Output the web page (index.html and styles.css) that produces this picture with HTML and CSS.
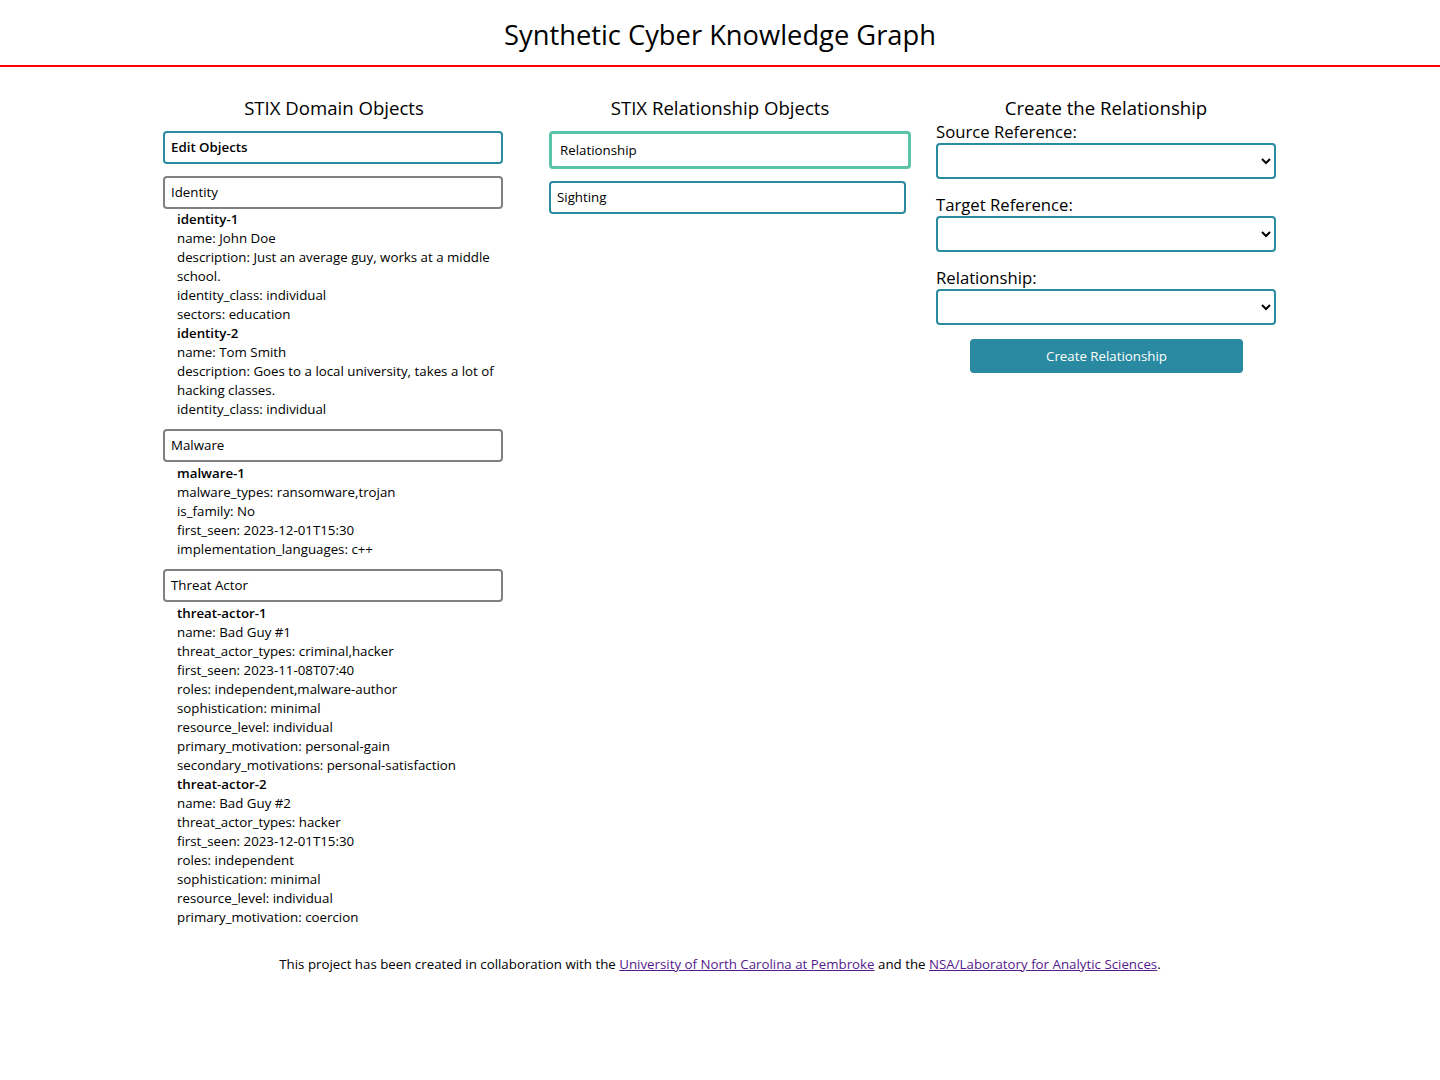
FILE: index.html
```html
<!DOCTYPE html>
<html lang="en">
<head>
<meta charset="utf-8">
<title>Synthetic Cyber Knowledge Graph</title>
<link rel="stylesheet" href="styles.css">
</head>
<body>
<header class="site-header">
  <h1 class="site-title">Synthetic Cyber Knowledge Graph</h1>
</header>
<main class="columns">
  <section class="col col-domain">
    <h2 class="col-title">STIX Domain Objects</h2>
    <div class="col-body">
      <div class="box box-edit">Edit Objects</div>
      <div class="box box-group">Identity</div>
      <ul class="obj-list">
        <li class="obj-id">identity-1</li>
        <li>name: John Doe</li>
        <li>description: Just an average guy, works at a middle school.</li>
        <li>identity_class: individual</li>
        <li>sectors: education</li>
        <li class="obj-id">identity-2</li>
        <li>name: Tom Smith</li>
        <li>description: Goes to a local university, takes a lot of hacking classes.</li>
        <li>identity_class: individual</li>
      </ul>
      <div class="box box-group">Malware</div>
      <ul class="obj-list obj-list-tall">
        <li class="obj-id">malware-1</li>
        <li>malware_types: ransomware,trojan</li>
        <li>is_family: No</li>
        <li>first_seen: 2023-12-01T15:30</li>
        <li>implementation_languages: c++</li>
      </ul>
      <div class="box box-group">Threat Actor</div>
      <ul class="obj-list obj-list-tall">
        <li class="obj-id">threat-actor-1</li>
        <li>name: Bad Guy #1</li>
        <li>threat_actor_types: criminal,hacker</li>
        <li>first_seen: 2023-11-08T07:40</li>
        <li>roles: independent,malware-author</li>
        <li>sophistication: minimal</li>
        <li>resource_level: individual</li>
        <li>primary_motivation: personal-gain</li>
        <li>secondary_motivations: personal-satisfaction</li>
        <li class="obj-id">threat-actor-2</li>
        <li>name: Bad Guy #2</li>
        <li>threat_actor_types: hacker</li>
        <li>first_seen: 2023-12-01T15:30</li>
        <li>roles: independent</li>
        <li>sophistication: minimal</li>
        <li>resource_level: individual</li>
        <li>primary_motivation: coercion</li>
      </ul>
    </div>
  </section>
  <section class="col col-rel">
    <h2 class="col-title">STIX Relationship Objects</h2>
    <div class="col-body">
      <div class="box box-rel box-active">Relationship</div>
      <div class="box box-rel">Sighting</div>
    </div>
  </section>
  <section class="col col-create">
    <h2 class="col-title">Create the Relationship</h2>
    <form class="col-body create-form">
      <label class="field-label" for="src">Source Reference:</label>
      <select class="field-select" id="src"><option></option></select>
      <label class="field-label" for="tgt">Target Reference:</label>
      <select class="field-select" id="tgt"><option></option></select>
      <label class="field-label" for="rel">Relationship:</label>
      <select class="field-select" id="rel"><option></option></select>
      <button type="button" class="create-btn">Create Relationship</button>
    </form>
  </section>
</main>
<footer class="site-footer">
  This project has been created in collaboration with the <a href="#">University of North Carolina at Pembroke</a> and the <a href="#">NSA/Laboratory for Analytic Sciences</a>.
</footer>
</body>
</html>
```

FILE: styles.css
```css
* { box-sizing: border-box; }

body {
  margin: 0;
  font-family: "Open Sans", "Noto Sans", sans-serif;
  color: #000;
  background: #fff;
}

.site-header {
  padding: 16px 0 11px;
  border-bottom: 2px solid #f00;
  text-align: center;
}

.site-title {
  margin: 0;
  font-size: 27.3px;
  font-weight: 400;
  line-height: 38px;
}

.columns {
  display: flex;
  justify-content: center;
  align-items: flex-start;
  padding-top: 29px;
}

.col {
  width: 386px;
}

.col-body {
  padding-left: 22px;
}

.col-create .col-body { padding-left: 23px; }

.col-title {
  margin: 0 0 11px;
  text-align: center;
  font-size: 18.6px;
  font-weight: 400;
  line-height: 24px;
}

.col-create .col-title { margin-bottom: 0; }

.box {
  width: 340px;
  height: 33px;
  border: 2px solid #808080;
  border-radius: 4px;
  padding: 0 6px;
  font-size: 13.3px;
  line-height: 29px;
}

.box-edit {
  border-color: #2a8aa0;
  font-weight: 600;
  margin-bottom: 12px;
}

.box-rel {
  width: 357px;
  border-color: #2a8aa0;
  margin-bottom: 12px;
}

.box-active {
  width: 362px;
  height: 38px;
  border: 3px solid #5bc4a8;
  padding-left: 8px;
  line-height: 32px;
  margin-top: 1px;
}

.obj-list {
  list-style: none;
  margin: 0;
  padding: 1px 0 10px 14px;
  width: 340px;
  font-size: 13.3px;
  line-height: 19px;
}

.obj-list-tall { padding-top: 2px; }

.obj-id { font-weight: 600; }

.create-form {
  display: flex;
  flex-direction: column;
  width: 363px;
}

.field-label {
  font-size: 16.7px;
  line-height: 23px;
}

.field-select {
  height: 36px;
  width: 340px;
  border: 2px solid #2a8aa0;
  border-radius: 4px;
  background: #fff;
  margin-bottom: 14px;
  font-family: inherit;
}

.create-btn {
  align-self: flex-start;
  margin-left: 34px;
  width: 273px;
  height: 34px;
  border: none;
  border-radius: 4px;
  background: #2889a0;
  color: #fff;
  font-family: inherit;
  font-size: 13.3px;
}

.site-footer {
  text-align: center;
  font-size: 13.3px;
  line-height: 18px;
  padding-top: 18px;
  padding-bottom: 40px;
}

.site-footer a { color: #551a8b; }
```
